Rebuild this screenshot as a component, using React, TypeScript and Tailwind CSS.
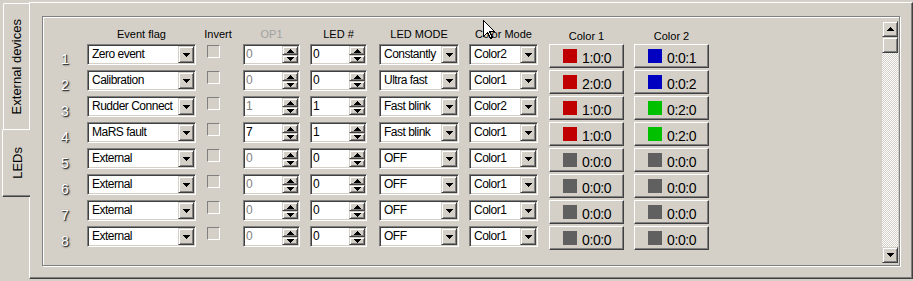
import React from "react";

/* Classic Win32 "LEDs" property page — vertical tabs on the left, an etched
   group box holding an 8-row LED event table, and a vertical scrollbar. */

type Row = {
  flag: string;
  op1: string;
  op1Enabled: boolean;
  led: string;
  mode: string;
  colorMode: string;
  color1: [string, string];
  color2: [string, string];
};

const RED = "#c00000";
const BLUE = "#0000c0";
const GREEN = "#00c000";
const OFF = "#606060";

const ROWS: Row[] = [
  { flag: "Zero event", op1: "0", op1Enabled: false, led: "0", mode: "Constantly", colorMode: "Color2", color1: [RED, "1:0:0"], color2: [BLUE, "0:0:1"] },
  { flag: "Calibration", op1: "0", op1Enabled: false, led: "0", mode: "Ultra fast", colorMode: "Color1", color1: [RED, "2:0:0"], color2: [BLUE, "0:0:2"] },
  { flag: "Rudder Connect", op1: "1", op1Enabled: false, led: "1", mode: "Fast blink", colorMode: "Color2", color1: [RED, "1:0:0"], color2: [GREEN, "0:2:0"] },
  { flag: "MaRS fault", op1: "7", op1Enabled: true, led: "1", mode: "Fast blink", colorMode: "Color1", color1: [RED, "1:0:0"], color2: [GREEN, "0:2:0"] },
  { flag: "External", op1: "0", op1Enabled: false, led: "0", mode: "OFF", colorMode: "Color1", color1: [OFF, "0:0:0"], color2: [OFF, "0:0:0"] },
  { flag: "External", op1: "0", op1Enabled: false, led: "0", mode: "OFF", colorMode: "Color1", color1: [OFF, "0:0:0"], color2: [OFF, "0:0:0"] },
  { flag: "External", op1: "0", op1Enabled: false, led: "0", mode: "OFF", colorMode: "Color1", color1: [OFF, "0:0:0"], color2: [OFF, "0:0:0"] },
  { flag: "External", op1: "0", op1Enabled: false, led: "0", mode: "OFF", colorMode: "Color1", color1: [OFF, "0:0:0"], color2: [OFF, "0:0:0"] },
];

const raised =
  "border border-t-[#d4d0c8] border-l-[#d4d0c8] border-b-[#404040] border-r-[#404040] bg-[#d4d0c8] shadow-[inset_1px_1px_0_#fff,inset_-1px_-1px_0_#808080]";
const sunken =
  "border border-t-[#808080] border-l-[#808080] border-b-white border-r-white bg-white p-px shadow-[inset_1px_1px_0_#404040,inset_-1px_-1px_0_#d4d0c8]";

function Arrow({ up = false }: { up?: boolean }) {
  return (
    <svg width="7" height="4" viewBox="0 0 7 4" className="block shrink-0" shapeRendering="crispEdges">
      <path
        d={up ? "M3 0H4V1H5V2H6V3H7V4H0V3H1V2H2V1H3Z" : "M0 0H7V1H6V2H5V3H4V4H3V3H2V2H1V1H0Z"}
        fill="#000"
      />
    </svg>
  );
}

function Combo({ value, className }: { value: string; className: string }) {
  return (
    <div className={`flex h-[21px] shrink-0 ${sunken} ${className}`}>
      <span className="flex-1 overflow-hidden whitespace-nowrap pl-[3px] text-[12px] leading-[17px] tracking-[-0.5px]">
        {value}
      </span>
      <div className={`flex w-[16px] items-center justify-center ${raised}`}>
        <Arrow />
      </div>
    </div>
  );
}

function Spinner({ value, enabled, className }: { value: string; enabled: boolean; className: string }) {
  return (
    <div className={`flex h-[21px] w-[57px] shrink-0 ${sunken} ${className}`}>
      <span
        className={`flex-1 pl-px text-[12px] leading-[17px] ${enabled ? "text-black" : "text-[#808080]"}`}
      >
        {value}
      </span>
      <div className="flex w-[16px] flex-col">
        <div className={`flex h-[9px] items-center justify-center ${raised}`}>
          <Arrow up />
        </div>
        <div className={`flex h-[8px] items-center justify-center ${raised}`}>
          <Arrow />
        </div>
      </div>
    </div>
  );
}

function ColorButton({ color, label, className }: { color: string; label: string; className: string }) {
  return (
    <div
      className={`flex h-[24px] w-[75px] shrink-0 items-center border border-t-white border-l-white border-b-[#404040] border-r-[#404040] pl-[13px] shadow-[inset_-1px_-1px_0_#808080] ${className}`}
    >
      <span className="h-[14px] w-[14px] shrink-0" style={{ backgroundColor: color }} />
      <span className="ml-[5px] pt-[3px] text-[14px] leading-[16px] tracking-[-0.4px]">{label}</span>
    </div>
  );
}

function Cursor() {
  return (
    <svg
      width="12"
      height="20"
      viewBox="0 0 12 20"
      className="pointer-events-none absolute left-[483px] top-[20px]"
      shapeRendering="crispEdges"
    >
      <path d="M0.5 0.5V16.5L4.5 12.5L7.5 18.5L9.5 17.5L6.5 11.5H11.5Z" fill="#fff" stroke="#000" strokeWidth="1" />
    </svg>
  );
}

export default function App() {
  return (
    <div className="relative h-[281px] w-[913px] overflow-hidden bg-[#d4d0c8] font-['Liberation_Sans',Arial,sans-serif] text-black">
      <div className="flex pt-[2px]">
        {/* Vertical tabs */}
        <div className="flex w-[29px] shrink-0 flex-col">
          <div className="ml-[3px] mt-px flex h-[126px] w-[26px] items-center justify-center rounded-tl-[2px] border-l border-t border-white">
            <span className="rotate-180 whitespace-nowrap text-[13px] leading-[15px] [writing-mode:vertical-rl]">
              External devices
            </span>
          </div>
          <div className="relative z-10 ml-[2px] flex h-[68px] w-[28px] items-center justify-center rounded-tl-[2px] border-b border-l border-t border-b-[#404040] border-l-white border-t-white bg-[#d4d0c8] shadow-[inset_0_-1px_0_#808080]">
            <span className="rotate-180 whitespace-nowrap pr-px text-[13px] leading-[15px] [writing-mode:vertical-rl]">
              LEDs
            </span>
          </div>
        </div>

        {/* Tab page */}
        <div className="h-[277px] w-[884px] shrink-0 border border-b-[#404040] border-l-white border-r-[#404040] border-t-white shadow-[inset_-1px_-1px_0_#808080]">
          <div className="ml-[12px] mt-[13px] flex h-[250px] w-[858px] border border-[#808080] shadow-[inset_1px_1px_0_#fff,1px_1px_0_#fff]">
            <div className="flex-1 pl-px pt-[11px]">
              {/* Header */}
              <div className="flex h-[16px] text-[11px] leading-[13px]">
                <div className="w-[43px] shrink-0" />
                <div className="w-[109px] shrink-0 text-center">Event flag</div>
                <div className="ml-[7px] w-[30px] shrink-0 text-center">Invert</div>
                <div className="ml-[10px] w-[57px] shrink-0 text-center text-[#a0a0a0]">OP1</div>
                <div className="ml-[10px] w-[57px] shrink-0 text-center">LED #</div>
                <div className="ml-[12px] w-[80px] shrink-0 text-center">LED MODE</div>
                <div className="ml-[10px] w-[69px] shrink-0 text-center">Color Mode</div>
                <div className="ml-[11px] w-[75px] shrink-0 pt-[2px] text-center">Color 1</div>
                <div className="ml-[10px] w-[75px] shrink-0 pt-[2px] text-center">Color 2</div>
              </div>

              {ROWS.map((row, i) => (
                <div key={i} className="flex h-[26px] items-start">
                  <div className="w-[43px] shrink-0 pl-[17px] pt-[7px] text-[14px] leading-[16px] text-white [text-shadow:1px_1px_0_#404040,1px_1px_2px_#202020]">
                    {i + 1}
                  </div>
                  <Combo value={row.flag} className="w-[109px]" />
                  <div className="ml-[11px] mt-px h-[13px] w-[13px] shrink-0 border border-b-white border-l-[#808080] border-r-white border-t-[#808080]" />
                  <Spinner value={row.op1} enabled={row.op1Enabled} className="ml-[23px]" />
                  <Spinner value={row.led} enabled className="ml-[10px]" />
                  <Combo value={row.mode} className="ml-[12px] w-[80px]" />
                  <Combo value={row.colorMode} className="ml-[10px] w-[69px]" />
                  <ColorButton color={row.color1[0]} label={row.color1[1]} className="ml-[11px]" />
                  <ColorButton color={row.color2[0]} label={row.color2[1]} className="ml-[10px]" />
                </div>
              ))}
            </div>

            {/* Scrollbar */}
            <div className="mr-px mt-[4px] flex h-[242px] w-[16px] shrink-0 flex-col">
              <div className={`flex h-[16px] items-center justify-center ${raised}`}>
                <Arrow up />
              </div>
              <div className={`h-[16px] ${raised}`} />
              <div className="flex-1 [background-image:repeating-conic-gradient(#ffffff_0_25%,#d4d0c8_0_50%)] [background-size:2px_2px]" />
              <div className={`flex h-[16px] items-center justify-center ${raised}`}>
                <Arrow />
              </div>
            </div>
          </div>
        </div>
      </div>
      <Cursor />
    </div>
  );
}
